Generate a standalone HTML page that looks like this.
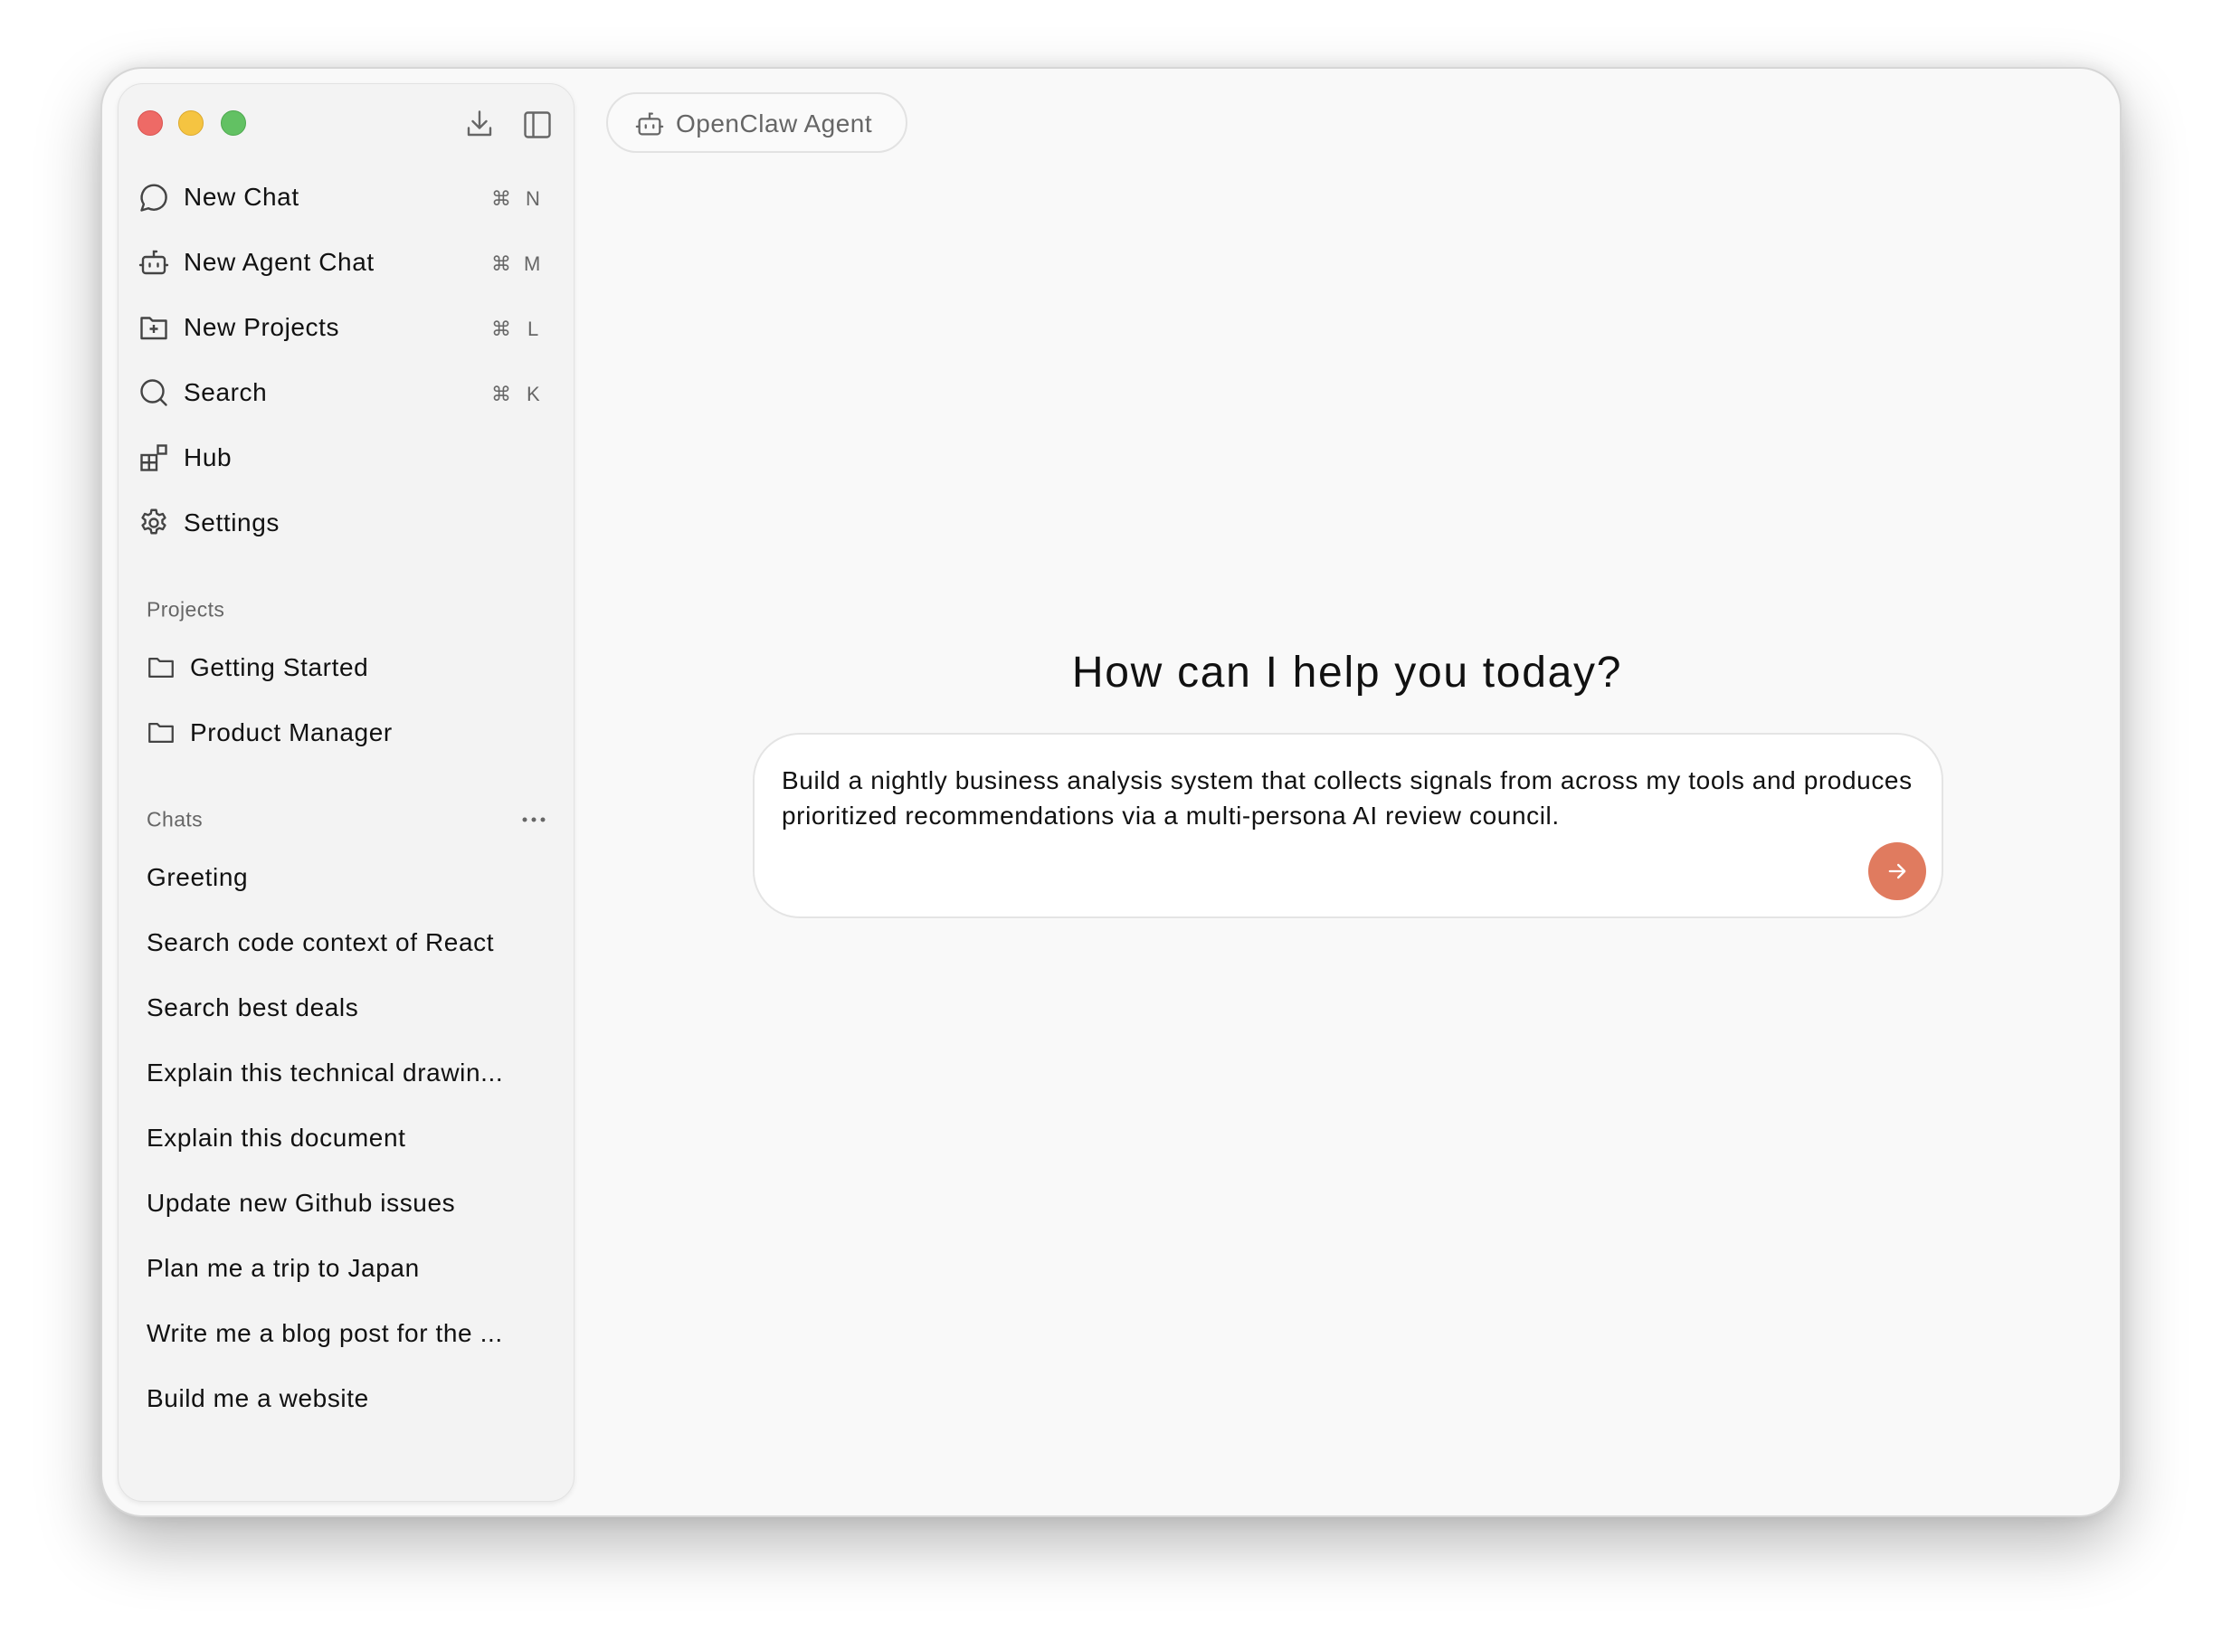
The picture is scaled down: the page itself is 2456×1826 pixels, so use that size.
<!DOCTYPE html>
<html><head><meta charset="utf-8"><style>
*{box-sizing:border-box;margin:0;padding:0}
body{width:2456px;height:1826px;background:#fff;font-family:"Liberation Sans",sans-serif;position:relative;overflow:hidden;color:#111}
.win{position:absolute;left:111px;top:74px;width:2234px;height:1603px;background:#f9f9f9;border-radius:46px;border:2px solid #d6d6d6;box-shadow:0 30px 70px rgba(0,0,0,.28),0 0 20px rgba(0,0,0,.1)}
.side{position:absolute;left:130px;top:92px;width:505px;height:1568px;background:#f3f3f3;border-radius:28px;border:1.5px solid #e2e2e2;box-shadow:0 2px 6px rgba(0,0,0,.08)}
.dot{position:absolute;top:122px;width:28px;height:28px;border-radius:50%}
.abs{position:absolute}
.row{position:absolute;left:203px;font-size:28px;letter-spacing:.6px;color:#111;transform:translateY(-50%)}
.ic{position:absolute;transform:translate(-50%,-50%)}
.sc{position:absolute;font-size:22px;color:#666;transform:translateY(-50%)}
.hdr{position:absolute;left:162px;font-size:23px;letter-spacing:.4px;color:#666;transform:translateY(-50%)}
.chat{position:absolute;left:162px;font-size:28px;letter-spacing:.6px;color:#111;transform:translateY(-50%)}
</style></head><body>
<div class="win"></div>
<div class="side"></div>
<div class="dot" style="left:152px;background:#ee6a66;border:1px solid #d9524f"></div>
<div class="dot" style="left:197px;background:#f5c441;border:1px solid #dca92d"></div>
<div class="dot" style="left:244px;background:#62c163;border:1px solid #4ea94f"></div>
<svg class="ic" style="left:530px;top:137px" width="36" height="36" viewBox="0 0 24 24" fill="none" stroke="#666" stroke-width="1.6" stroke-linecap="round" stroke-linejoin="round"><path d="M12 3v12M7 10l5 5 5-5M4 15v5h16v-5"/></svg>
<svg class="ic" style="left:594px;top:138px" width="36" height="36" viewBox="0 0 24 24" fill="none" stroke="#666" stroke-width="1.6"><rect x="3" y="3" width="18" height="18" rx="2"/><path d="M9 3v18"/></svg>

<svg class="ic" style="left:170px;top:219px" width="36" height="36" viewBox="0 0 24 24" fill="none" stroke="#444" stroke-width="1.6" stroke-linejoin="round"><path d="M3 21l1.6-4.5A9 9 0 1 1 8 19.5z"/></svg>
<div class="row" style="top:218px">New Chat</div>
<div class="sc" style="left:543px;top:220px">⌘</div><div class="sc" style="left:581px;top:220px">N</div>

<svg class="ic" style="left:170px;top:290px" width="36" height="36" viewBox="0 0 24 24" fill="none" stroke="#444" stroke-width="1.6" stroke-linecap="round"><rect x="4" y="8" width="16" height="12" rx="2"/><path d="M12 8V4h2M2 14h2M20 14h2M9 13v2M15 13v2"/></svg>
<div class="row" style="top:290px">New Agent Chat</div>
<div class="sc" style="left:543px;top:292px">⌘</div><div class="sc" style="left:579px;top:292px">M</div>

<svg class="ic" style="left:170px;top:362px" width="36" height="36" viewBox="0 0 24 24" fill="none" stroke="#444" stroke-width="1.6" stroke-linejoin="round"><path d="M3 5h6l2 2h10v13H3z"/><path d="M12 10v6M9 13h6"/></svg>
<div class="row" style="top:362px">New Projects</div>
<div class="sc" style="left:543px;top:364px">⌘</div><div class="sc" style="left:583px;top:364px">L</div>

<svg class="ic" style="left:170px;top:434px" width="36" height="36" viewBox="0 0 24 24" fill="none" stroke="#444" stroke-width="1.6" stroke-linecap="round"><circle cx="11" cy="11" r="8"/><path d="M17 17l4 4"/></svg>
<div class="row" style="top:434px">Search</div>
<div class="sc" style="left:543px;top:436px">⌘</div><div class="sc" style="left:582px;top:436px">K</div>

<svg class="ic" style="left:170px;top:506px" width="36" height="36" viewBox="0 0 24 24" fill="none" stroke="#444" stroke-width="1.6"><rect x="3" y="10" width="11" height="11"/><path d="M3 15.5h11M8.5 10v11"/><rect x="15" y="3" width="6" height="6"/></svg>
<div class="row" style="top:506px">Hub</div>

<svg class="ic" style="left:170px;top:578px" width="36" height="36" viewBox="0 0 24 24" fill="none" stroke="#444" stroke-width="1.6" stroke-linejoin="round"><circle cx="12" cy="12" r="3"/><path d="M10.3 2.5h3.4l.5 2.6 1.9 1.1 2.5-.9 1.7 2.9-2 1.7v2.2l2 1.7-1.7 2.9-2.5-.9-1.9 1.1-.5 2.6h-3.4l-.5-2.6-1.9-1.1-2.5.9-1.7-2.9 2-1.7v-2.2l-2-1.7 1.7-2.9 2.5.9 1.9-1.1z"/></svg>
<div class="row" style="top:578px">Settings</div>

<div class="hdr" style="top:674px">Projects</div>
<svg class="ic" style="left:178px;top:738px" width="34" height="34" viewBox="0 0 24 24" fill="none" stroke="#444" stroke-width="1.6" stroke-linejoin="round"><path d="M3 5h6l2 2h10v12H3z"/></svg>
<div class="chat" style="left:210px;top:738px">Getting Started</div>
<svg class="ic" style="left:178px;top:810px" width="34" height="34" viewBox="0 0 24 24" fill="none" stroke="#444" stroke-width="1.6" stroke-linejoin="round"><path d="M3 5h6l2 2h10v12H3z"/></svg>
<div class="chat" style="left:210px;top:810px">Product Manager</div>

<div class="hdr" style="top:906px">Chats</div>
<svg class="abs" style="left:576px;top:900px" width="28" height="12" viewBox="0 0 28 12" fill="#666"><circle cx="4" cy="6" r="2.5"/><circle cx="14" cy="6" r="2.5"/><circle cx="24" cy="6" r="2.5"/></svg>
<div class="chat" style="top:970px">Greeting</div>
<div class="chat" style="top:1042px">Search code context of React</div>
<div class="chat" style="top:1114px">Search best deals</div>
<div class="chat" style="top:1186px">Explain this technical drawin...</div>
<div class="chat" style="top:1258px">Explain this document</div>
<div class="chat" style="top:1330px">Update new Github issues</div>
<div class="chat" style="top:1402px">Plan me a trip to Japan</div>
<div class="chat" style="top:1474px">Write me a blog post for the ...</div>
<div class="chat" style="top:1546px">Build me a website</div>

<div class="abs" style="left:670px;top:102px;width:333px;height:67px;border:2px solid #e2e2e2;border-radius:34px;background:#fafafa"></div>
<svg class="ic" style="left:718px;top:137px" width="34" height="34" viewBox="0 0 24 24" fill="none" stroke="#666" stroke-width="1.6" stroke-linecap="round"><rect x="4" y="8" width="16" height="12" rx="2"/><path d="M12 8V4h2M2 14h2M20 14h2M9 13v2M15 13v2"/></svg>
<div class="abs" style="left:747px;top:121px;font-size:28px;letter-spacing:.5px;color:#666">OpenClaw Agent</div>

<div class="abs" style="left:0;width:2978px;top:716px;text-align:center;font-size:48px;font-weight:500;color:#111;letter-spacing:1.7px">How can I help you today?</div>
<div class="abs" style="left:832px;top:810px;width:1316px;height:205px;background:#fff;border:2px solid #e4e4e4;border-radius:52px"></div>
<div class="abs" style="left:864px;top:843px;width:1280px;font-size:28px;letter-spacing:.6px;line-height:39px;color:#111">Build a nightly business analysis system that collects signals from across my tools and produces prioritized recommendations via a multi-persona AI review council.</div>
<div class="abs" style="left:2065px;top:931px;width:64px;height:64px;border-radius:50%;background:#e07b5f"></div>
<svg class="ic" style="left:2097px;top:963px" width="28" height="28" viewBox="0 0 24 24" fill="none" stroke="#fff" stroke-width="2" stroke-linecap="round" stroke-linejoin="round"><path d="M5 12h14M13 6l6 6-6 6"/></svg>
</body></html>
